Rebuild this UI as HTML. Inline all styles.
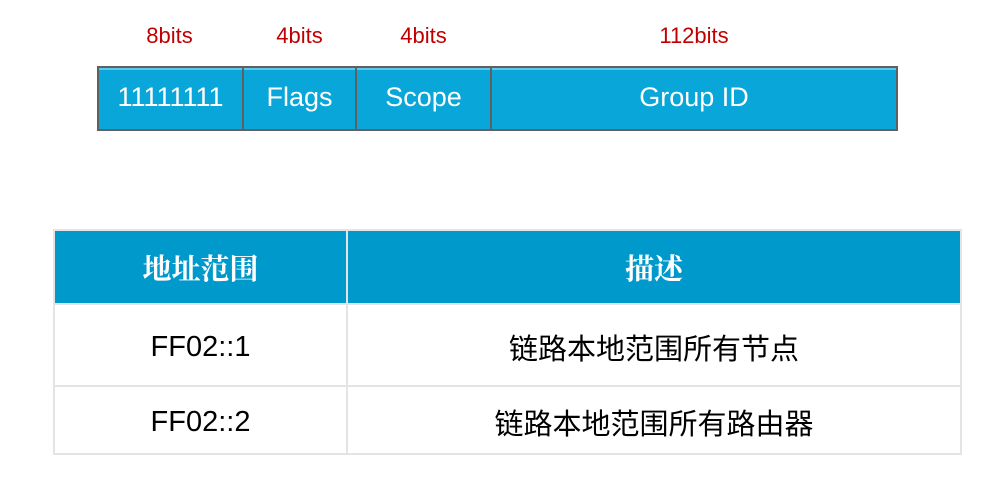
<!DOCTYPE html>
<html><head><meta charset="utf-8"><style>
body{margin:0;width:988px;height:490px;background:#fff;position:relative;font-family:"Liberation Sans","Noto Sans CJK SC",sans-serif;overflow:hidden}
.lbl{position:absolute;top:23px;color:#c00000;font-size:22px;text-align:center}
.bar{position:absolute;top:66px;height:61px;background:#08a6d9;border:2px solid #606060;border-left:none;box-shadow:inset 0 2px 0 #5cc8ea;color:#fff;font-size:27px;text-align:center;line-height:58px}
table{position:absolute;left:53px;top:229px;border-collapse:collapse}
td{border:2px solid #e4e4e4;text-align:center;font-size:29px;color:#000;padding:0}
th{background:#0099cc;color:#fff;font-family:"Liberation Serif","Noto Serif CJK SC",serif;font-weight:bold;font-size:29px;border:2px solid #e4e4e4;height:72px;padding:0}
</style></head><body>
<div class="lbl" style="left:97px;width:145px">8bits</div>
<div class="lbl" style="left:244px;width:111px">4bits</div>
<div class="lbl" style="left:357px;width:133px">4bits</div>
<div class="lbl" style="left:492px;width:404px">112bits</div>
<div class="bar" style="left:97px;width:143px;border-left:2px solid #606060">11111111</div>
<div class="bar" style="left:244px;width:111px">Flags</div>
<div class="bar" style="left:357px;width:133px">Scope</div>
<div class="bar" style="left:492px;width:404px">Group ID</div>
<table>
<tr><th style="width:291px">地址范围</th><th style="width:612px">描述</th></tr>
<tr><td style="height:76px;padding-top:4px">FF02::1</td><td style="padding-top:4px">链路本地范围所有节点</td></tr>
<tr><td style="height:62px;padding-top:4px">FF02::2</td><td style="padding-top:4px">链路本地范围所有路由器</td></tr>
</table>
</body></html>
